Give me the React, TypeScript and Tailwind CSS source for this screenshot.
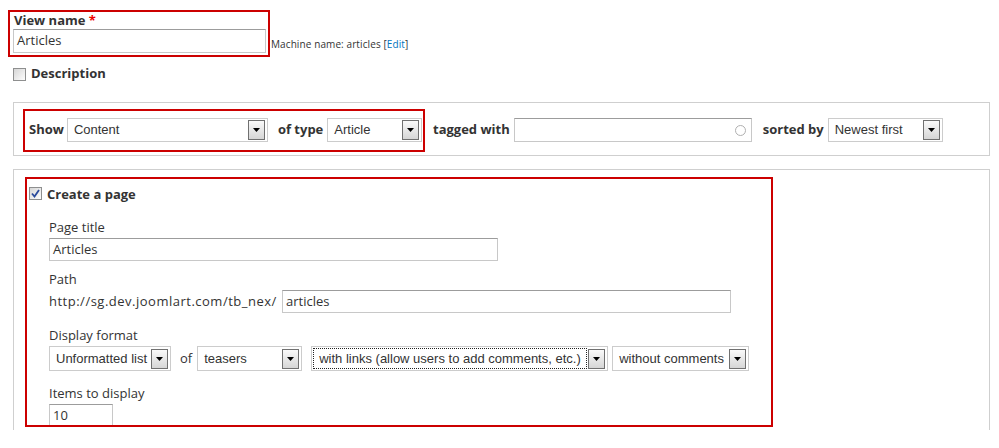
import React from "react";

const selectFont = "font-['Liberation_Sans',Arial,sans-serif]";

function Arrow() {
  return (
    <div className="w-[17px] h-[20px] shrink-0 border border-[#707070] bg-linear-to-b from-[#fafafa] to-[#d6d6d6] flex items-center justify-center">
      <svg width="7" height="4" viewBox="0 0 7 4">
        <polygon points="0,0 7,0 3.5,4" fill="#000" />
      </svg>
    </div>
  );
}

function Select({ text, w, h = "h-[24px]", focused = false }: { text: string; w: string; h?: string; focused?: boolean }) {
  return (
    <div className={`${w} ${h} shrink-0 border border-[#cccccc] bg-white flex items-center pr-[2px] ${selectFont} text-[13px] text-[#333]`}>
      {focused ? (
        <div className="flex-1 self-stretch my-[1px] ml-[1px] mr-[1px] border border-dotted border-[#222] flex items-center pl-[5px] whitespace-nowrap overflow-hidden">
          {text}
        </div>
      ) : (
        <div className="flex-1 pl-[6px] whitespace-nowrap overflow-hidden">{text}</div>
      )}
      <Arrow />
    </div>
  );
}

function TextInput({ value, w, h = "h-[23px]", children }: { value?: string; w: string; h?: string; children?: React.ReactNode }) {
  return (
    <div className={`${w} ${h} shrink-0 border border-[#c8c8c8] border-t-[#9c9c9c] bg-white flex items-center px-[3px] text-[13px] text-[#333]`}>
      <span className="flex-1 whitespace-nowrap">{value}</span>
      {children}
    </div>
  );
}

function Checkbox({ checked = false }: { checked?: boolean }) {
  return (
    <div className="w-[13px] h-[13px] shrink-0 border border-[#8e8f8f] bg-linear-to-br from-[#d6d6d6] to-[#fdfdfd] flex items-center justify-center">
      {checked && (
        <svg width="9" height="9" viewBox="0 0 9 9">
          <polyline points="1,4.5 3.5,7.5 8,1" fill="none" stroke="#2a4a9c" strokeWidth="1.8" />
        </svg>
      )}
    </div>
  );
}

export default function App() {
  return (
    <div className="w-[999px] h-[448px] bg-white overflow-hidden text-[#333] font-['Open_Sans',sans-serif]">
      {/* View name */}
      <div className="flex items-end pt-[10px] pl-[8px]">
        <div className="w-[262px] border-2 border-[#c00] pl-[3px] pr-[2px] pb-[2px]">
          <div className="h-[17px] leading-[17px] text-[13px] font-bold pl-[1px]">
            View name <span className="text-[#e00]">*</span>
          </div>
          <TextInput value="Articles" w="w-[253px]" h="h-[24px]" />
        </div>
        <div className="ml-[1px] mb-[6px] text-[10px] leading-[14px] tracking-[0.1px]">
          Machine name: articles [<span className="text-[#0074bd]">Edit</span>]
        </div>
      </div>

      {/* Description */}
      <div className="flex items-center h-[16px] mt-[9px] ml-[13px] gap-[5px]">
        <Checkbox />
        <span className="text-[13px] font-bold">Description</span>
      </div>

      {/* Filter fieldset */}
      <div className="ml-[13px] mt-[20px] w-[977px] h-[54px] border border-[#cfcfcf] flex items-center pl-[9px] pt-[2px]">
        <div className="w-[402px] h-[43px] border-2 border-[#c00] flex items-center pl-[4px] text-[13px]">
          <span className="font-bold">Show</span>
          <div className="ml-[3px]">
            <Select text="Content" w="w-[201px]" />
          </div>
          <span className="font-bold ml-[10px]">of type</span>
          <div className="ml-[4px]">
            <Select text="Article" w="w-[95px]" />
          </div>
        </div>
        <span className="font-bold text-[13px] ml-[8px]">tagged with</span>
        <div className="ml-[4px]">
          <TextInput w="w-[238px]" h="h-[24px]">
            <div className="w-[11px] h-[11px] rounded-full border-[1.5px] border-[#b0b0b0] mr-[2px]" />
          </TextInput>
        </div>
        <span className="font-bold text-[13px] ml-[11px]">sorted by</span>
        <div className="ml-[4px]">
          <Select text="Newest first" w="w-[115px]" />
        </div>
      </div>

      {/* Page fieldset */}
      <div className="ml-[13px] mt-[13px] w-[977px] h-[261px] border border-b-0 border-[#cfcfcf] pl-[11px] pt-[7px]">
        <div className="w-[748px] h-[250px] border-2 border-[#c00] overflow-hidden text-[13px]">
          <div className="flex items-center h-[16px] mt-[6px] ml-[2px] gap-[5px]">
            <Checkbox checked />
            <span className="font-bold mt-[4px]">Create a page</span>
          </div>

          <div className="pl-[22px]">
            <div className="mt-[18px] leading-[16px]">Page title</div>
            <div className="mt-[3px]">
              <TextInput value="Articles" w="w-[449px]" />
            </div>

            <div className="mt-[10px] leading-[16px]">Path</div>
            <div className="mt-[3px] flex items-center">
              <span className="w-[228px] whitespace-nowrap tracking-[0.5px]">http://sg.dev.joomlart.com/tb_nex/</span>
              <div className="ml-[5px]">
                <TextInput value="articles" w="w-[449px]" />
              </div>
            </div>

            <div className="mt-[14px] leading-[16px]">Display format</div>
            <div className="mt-[3px] flex items-center">
              <Select text="Unformatted list" w="w-[122px]" h="h-[25px]" />
              <span className="ml-[9px]">of</span>
              <div className="ml-[5px]">
                <Select text="teasers" w="w-[105px]" h="h-[25px]" />
              </div>
              <div className="ml-[9px]">
                <Select text="with links (allow users to add comments, etc.)" w="w-[297px]" h="h-[25px]" focused />
              </div>
              <div className="ml-[4px]">
                <Select text="without comments" w="w-[137px]" h="h-[25px]" />
              </div>
            </div>

            <div className="mt-[14px] leading-[16px]">Items to display</div>
            <div className="mt-[3px]">
              <TextInput value="10" w="w-[64px]" h="h-[24px]" />
            </div>
          </div>
        </div>
      </div>
    </div>
  );
}
